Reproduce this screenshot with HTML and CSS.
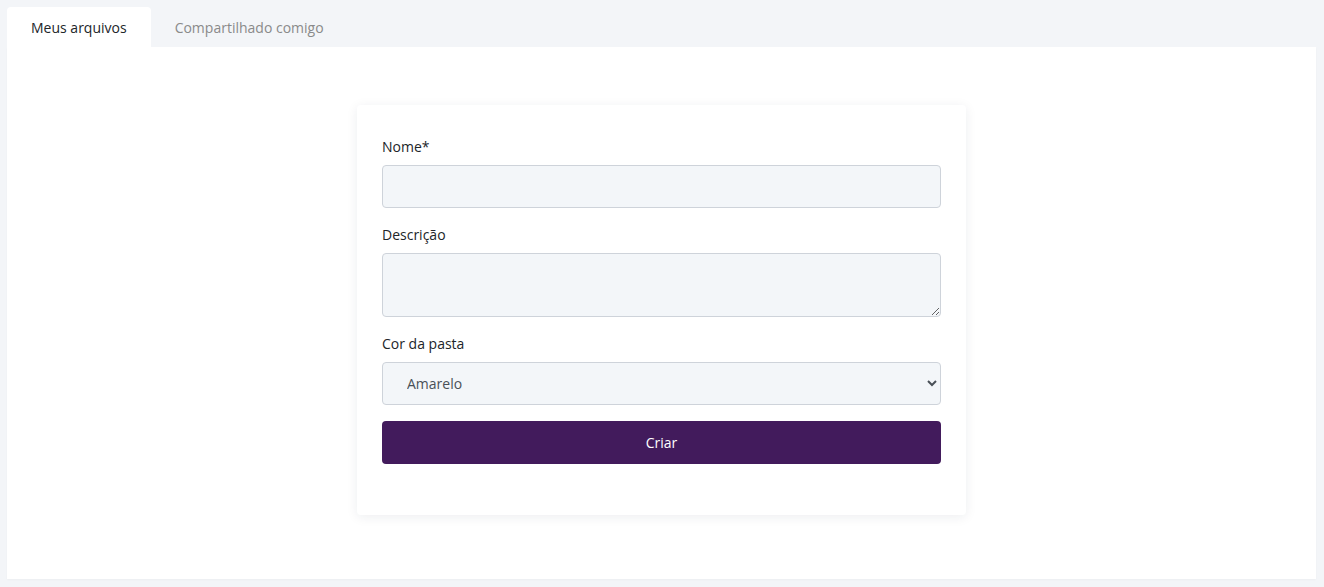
FILE: index.html
```html
<!DOCTYPE html>
<html lang="pt">
<head>
<meta charset="utf-8">
<title>Arquivos</title>
<link rel="stylesheet" href="styles.css">
</head>
<body>
<div class="page">
  <div class="tabs">
    <div class="tab active">Meus arquivos</div>
    <div class="tab">Compartilhado comigo</div>
  </div>
  <div class="panel">
    <form class="card">
      <label class="label" for="nome">Nome*</label>
      <input class="field" id="nome" type="text">
      <label class="label" for="desc">Descrição</label>
      <textarea class="field area" id="desc"></textarea>
      <label class="label" for="cor">Cor da pasta</label>
      <select class="field select" id="cor">
        <option>Amarelo</option>
      </select>
      <button class="btn" type="button">Criar</button>
    </form>
  </div>
</div>
</body>
</html>
```
FILE: styles.css
```css
html, body {
  margin: 0;
  padding: 0;
  background: #f3f5f8;
  font-family: "Open Sans", "Noto Sans", sans-serif;
  font-size: 14px;
  color: #212529;
}
.page {
  padding: 7px 8px 8px 7px;
}
.tabs {
  display: flex;
  height: 40px;
}
.tab {
  display: flex;
  align-items: center;
  padding: 0 24px;
  color: #8a8a8a;
  font-size: 14px;
  border-radius: 4px 4px 0 0;
}
.tab.active {
  background: #ffffff;
  color: #212529;
}
.panel {
  background: #ffffff;
  height: 532px;
  display: flex;
  justify-content: center;
  align-items: flex-start;
  padding-top: 58px;
  box-sizing: border-box;
  box-shadow: 0 1px 2px rgba(0,0,0,0.03);
}
.card {
  width: 609px;
  box-sizing: border-box;
  padding: 32px 25px 51px;
  background: #ffffff;
  border-radius: 4px;
  box-shadow: 0 2px 12px rgba(30, 40, 60, 0.08);
  display: flex;
  flex-direction: column;
}
.label {
  display: block;
  line-height: 20px;
  margin-bottom: 8px;
  color: #212529;
}
.field {
  display: block;
  box-sizing: border-box;
  width: 100%;
  height: 43px;
  margin: 0 0 17px;
  background: #f3f6f9;
  border: 1px solid #ced3da;
  border-radius: 4px;
  font-family: inherit;
  font-size: 14px;
  color: #495057;
  padding: 0 12px;
}
.area {
  height: 64px;
  padding: 8px 12px;
  margin-bottom: 17px;
}
.select {
  padding-left: 20px;
  margin-bottom: 16px;
}
.btn {
  height: 43px;
  width: 100%;
  border: none;
  border-radius: 4px;
  background: #421b5c;
  color: #ffffff;
  font-family: inherit;
  font-size: 14px;
  cursor: pointer;
}
```
